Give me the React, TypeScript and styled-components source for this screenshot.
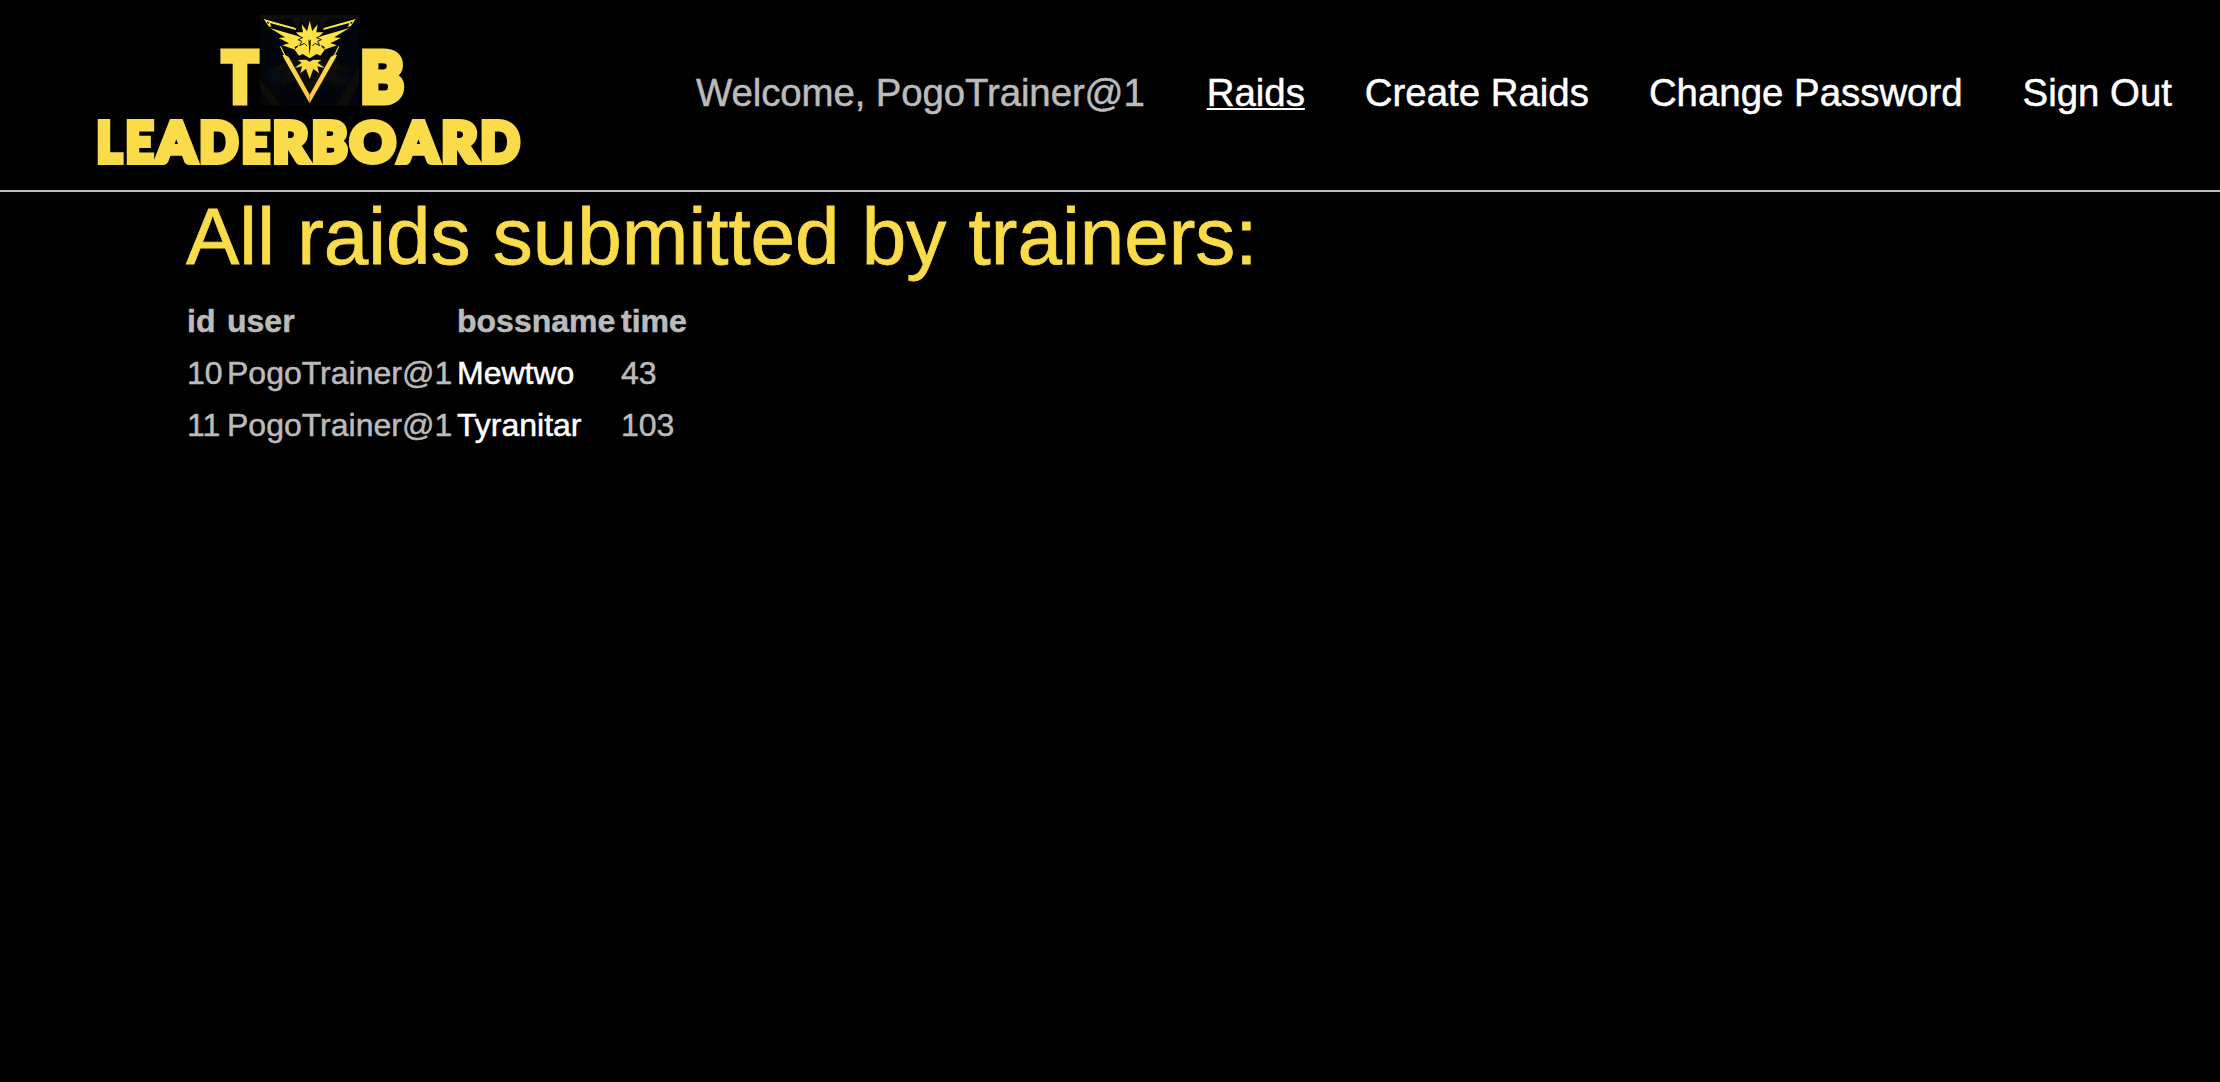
import React from "react";
import styled, { createGlobalStyle } from "styled-components";

const GlobalStyle = createGlobalStyle`
  body {
    margin: 0;
    min-height: 100vh;
    background: #000;
    color: #bbb;
    font-family: "Liberation Sans", Helvetica, Arial, sans-serif;
    font-size: 32px;
    -webkit-text-stroke: 0.5px currentColor;
  }
`;

const Header = styled.header`
  box-sizing: border-box;
  height: 192px;
  display: flex;
  justify-content: space-between;
  align-items: flex-start;
  padding-right: 48px;
  border-bottom: 2px solid #bbb;
`;

const LogoLink = styled.a`
  display: block;
  padding-left: 80px;
  line-height: 0;
`;

const Nav = styled.nav`
  display: flex;
  gap: 60px;
  padding-top: 64px;
  font-size: 38.4px;
  line-height: 57.6px;
  white-space: nowrap;
`;

const Welcome = styled.span`
  letter-spacing: -0.1px;
  margin-right: 2px;
`;

const NavLink = styled.a<{ $active?: boolean }>`
  color: #fff;
  text-decoration: ${(p) => (p.$active ? "underline" : "none")};
  text-decoration-thickness: 2px;
  text-underline-offset: 2px;
  text-decoration-skip-ink: none;
`;

const Main = styled.main`
  padding: 1px 0 0 186px;
`;

const Title = styled.h1`
  margin: 0 0 14px;
  color: #fadc4a;
  font-size: 80px;
  font-weight: 400;
  line-height: 88px;
  -webkit-text-stroke-width: 0.8px;
`;

const Table = styled.table`
  table-layout: fixed;
  width: 600px;
  margin-left: 1px;
  border-collapse: collapse;
  line-height: 52px;
  white-space: nowrap;
`;

const Col = styled.col<{ $w: number }>`
  width: ${(p) => p.$w}px;
`;

const HeadCell = styled.th`
  padding: 0;
  text-align: left;
  font-weight: 700;
`;

const Cell = styled.td`
  padding: 0;
`;

const BossLink = styled.a`
  color: #fff;
`;

const LogoText = styled.text`
  font-family: Lato, "Open Sans", sans-serif;
  font-weight: 900;
  fill: #fadc4a;
  stroke: #fadc4a;
  stroke-linejoin: miter;
  -webkit-text-stroke: initial;
`;

const EmblemHalf = () => (
  <g>
    <path d="M41 42 L137 69 L138 75 L60 54 L64 66 L56 64 Z M50 49 L54 58 L58 53 Z" fillRule="evenodd" />
    <path d="M60 69 L143 93 L153 97 L143 103 L152 108 L146 120 L134 126 L136 134 L97 121 L117 115 L86 99 L105 97 Z" />
    <path d="M89 122 L94 125 L106 150 L116 156 L179 269 L179 295 L103 162 L97 150 L102 150 Z" />
  </g>
);

const Logo = () => (
  <svg width="460" height="180" viewBox="80 0 460 180">
    <defs>
      <linearGradient id="gold" x1="0" y1="40" x2="0" y2="295" gradientUnits="userSpaceOnUse">
        <stop offset="0" stopColor="#ffe843" />
        <stop offset="0.5" stopColor="#fcdc48" />
        <stop offset="1" stopColor="#ffc24b" />
      </linearGradient>
      <radialGradient id="cloud">
        <stop offset="0" stopColor="#07101b" />
        <stop offset="1" stopColor="#020509" />
      </radialGradient>
      <clipPath id="tile">
        <rect x="30" y="30" width="298" height="272" />
      </clipPath>
    </defs>
    <g transform="translate(250 5) scale(0.33333)" clipPath="url(#tile)">
      <rect x="30" y="30" width="298" height="272" fill="#020509" />
      <ellipse cx="80" cy="215" rx="45" ry="35" fill="url(#cloud)" />
      <ellipse cx="270" cy="225" rx="50" ry="30" fill="url(#cloud)" />
      <g fill="#0e0d08">
        <path d="M30 30 H328 V42 H235 L215 75 L205 42 L179 80 L153 42 L143 75 L123 42 H30 Z" />
        <path d="M50 200 L130 160 H228 L310 200 L255 198 L290 240 L225 225 L179 300 L133 225 L95 240 L103 198 Z" />
        <path d="M30 222 L96 302 H62 L30 245 Z M328 180 V235 L292 302 H258 Z" />
      </g>
      <g fill="url(#gold)">
        <EmblemHalf />
        <g transform="matrix(-1 0 0 1 358 0)">
          <EmblemHalf />
        </g>
        <path d="M179 74 L185 80 L203 58 L199 82 L220 82 L207 95 L222 101 L207 106 L215 125 L224 134 L211 152 L200 147 L179 160 L158 147 L147 152 L134 134 L143 125 L151 106 L136 101 L151 95 L138 82 L159 82 L155 58 L173 80 Z" />
        <path d="M170 84 L179 48 L188 84 Z" />
        <path d="M179 170 L190 164 L214 165 L203 173 L224 189 L202 184 L207 205 L190 191 L179 222 L168 191 L151 205 L156 184 L134 189 L155 173 L144 165 L168 164 Z" />
      </g>
      <g fill="none" stroke="#100f06" strokeWidth="3" strokeLinejoin="miter">
        <path d="M144 92 L158 98 L144 104 L155 109 L149 122 L163 115 L171 123" />
        <path d="M214 92 L200 98 L214 104 L203 109 L209 122 L195 115 L187 123" />
      </g>
      <path d="M175 102 L179 108 L183 102 L181 130 L179 149 L177 130 Z" fill="#100f06" />
    </g>
    <LogoText y="102.2" fontSize="69" strokeWidth="7">
      <tspan x="222.5" textLength="35" lengthAdjust="spacingAndGlyphs">T</tspan>
      <tspan x="360.5" textLength="43" lengthAdjust="spacingAndGlyphs">B</tspan>
    </LogoText>
    <LogoText y="161.7" fontSize="54.8" strokeWidth="6">
      {wordmark.map(([letter, x, length], i) => (
        <tspan key={i} x={x} textLength={length} lengthAdjust="spacingAndGlyphs">
          {letter}
        </tspan>
      ))}
    </LogoText>
  </svg>
);

const wordmark: [string, number, number][] = [
  ["L", 96.8, 25],
  ["E", 125.8, 27.5],
  ["A", 157, 38.5],
  ["D", 199.5, 38.5],
  ["E", 241.8, 27.8],
  ["R", 272.8, 35.5],
  ["B", 311.8, 35.5],
  ["O", 350, 45.5],
  ["A", 399.3, 38.5],
  ["R", 441.5, 36],
  ["D", 480.5, 39],
];

const links = [
  { label: "Raids", active: true },
  { label: "Create Raids" },
  { label: "Change Password" },
  { label: "Sign Out" },
];

const raids = [
  { id: 10, user: "PogoTrainer@1", boss: "Mewtwo", time: 43 },
  { id: 11, user: "PogoTrainer@1", boss: "Tyranitar", time: 103 },
];

export default function App() {
  return (
    <>
      <GlobalStyle />
      <Header>
        <LogoLink>
          <Logo />
        </LogoLink>
        <Nav>
          <Welcome>Welcome, PogoTrainer@1</Welcome>
          {links.map((l) => (
            <NavLink key={l.label} $active={l.active}>
              {l.label}
            </NavLink>
          ))}
        </Nav>
      </Header>
      <Main>
        <Title>All raids submitted by trainers:</Title>
        <Table>
          <colgroup>
            <Col $w={40} />
            <Col $w={230} />
            <Col $w={164} />
            <Col $w={166} />
          </colgroup>
          <thead>
            <tr>
              <HeadCell>id</HeadCell>
              <HeadCell>user</HeadCell>
              <HeadCell>bossname</HeadCell>
              <HeadCell>time</HeadCell>
            </tr>
          </thead>
          <tbody>
            {raids.map((r) => (
              <tr key={r.id}>
                <Cell>{r.id}</Cell>
                <Cell>{r.user}</Cell>
                <Cell>
                  <BossLink>{r.boss}</BossLink>
                </Cell>
                <Cell>{r.time}</Cell>
              </tr>
            ))}
          </tbody>
        </Table>
      </Main>
    </>
  );
}
